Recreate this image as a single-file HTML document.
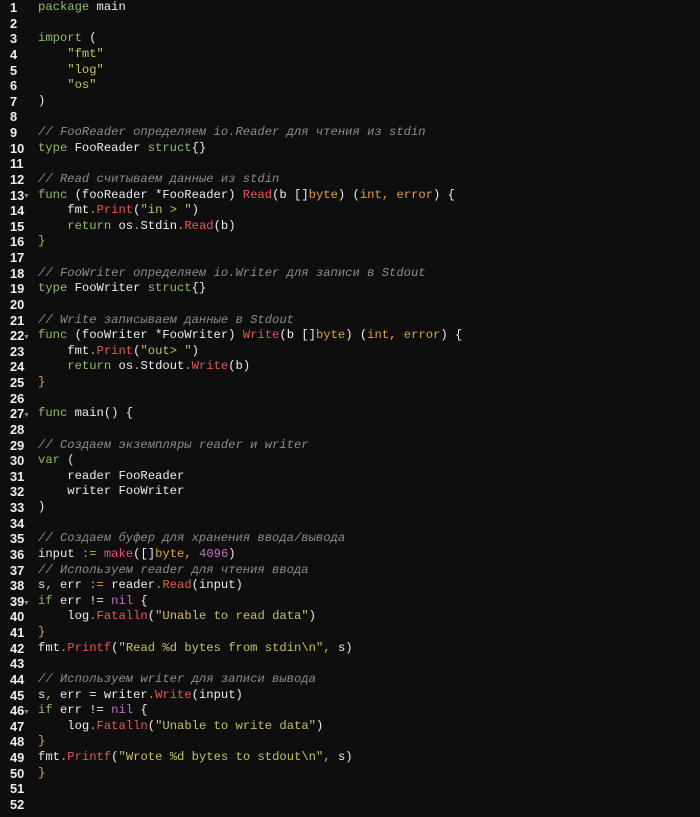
<!DOCTYPE html>
<html><head><meta charset="utf-8"><style>
body{margin:0;background:#0f0e0f;width:700px;height:817px;overflow:hidden}
pre{margin:0;position:absolute;top:0;left:0;font-family:"Liberation Mono","DejaVu Sans Mono",monospace;font-size:12.2px;line-height:15.63px;color:#ececec}
pre.ln{left:10px;width:22px;color:#f0f0f0;font-family:"Liberation Sans","DejaVu Sans",sans-serif;font-size:12.8px;font-weight:bold}
.code{position:absolute;left:38px}
.ar{position:absolute;left:23px;color:#888;font-size:7px;line-height:8px}
.k{color:#8fbd6a}.s{color:#c5c062}.f{color:#e5584a}.t{color:#dca23e}.c{color:#8c8c8c;font-style:italic}.o{color:#e8a040}.p{color:#c26cc8}.m{color:#e0508a}
</style></head><body>
<pre class="ln">1
2
3
4
5
6
7
8
9
10
11
12
13
14
15
16
17
18
19
20
21
22
23
24
25
26
27
28
29
30
31
32
33
34
35
36
37
38
39
40
41
42
43
44
45
46
47
48
49
50
51
52</pre>
<div class="ar" style="top:192px">▼</div>
<div class="ar" style="top:333px">▼</div>
<div class="ar" style="top:411px">▼</div>
<div class="ar" style="top:599px">▼</div>
<div class="ar" style="top:708px">▼</div>
<pre class="code"><span class="k">package</span> main

<span class="k">import</span> (
    <span class="s">"fmt"</span>
    <span class="s">"log"</span>
    <span class="s">"os"</span>
)

<span class="c">// FooReader определяем io.Reader для чтения из stdin</span>
<span class="k">type</span> FooReader <span class="k">struct</span>{}

<span class="c">// Read считываем данные из stdin</span>
<span class="k">func</span> (fooReader *FooReader) <span class="f">Read</span>(b []<span class="t">byte</span>) (<span class="t">int</span><span class="o">,</span> <span class="t">error</span>) {
    fmt<span class="o">.</span><span class="f">Print</span>(<span class="s">"in &gt; "</span>)
    <span class="k">return</span> os<span class="o">.</span>Stdin<span class="o">.</span><span class="f">Read</span>(b)
<span class="o">}</span>

<span class="c">// FooWriter определяем io.Writer для записи в Stdout</span>
<span class="k">type</span> FooWriter <span class="k">struct</span>{}

<span class="c">// Write записываем данные в Stdout</span>
<span class="k">func</span> (fooWriter *FooWriter) <span class="f">Write</span>(b []<span class="t">byte</span>) (<span class="t">int</span><span class="o">,</span> <span class="t">error</span>) {
    fmt<span class="o">.</span><span class="f">Print</span>(<span class="s">"out&gt; "</span>)
    <span class="k">return</span> os<span class="o">.</span>Stdout<span class="o">.</span><span class="f">Write</span>(b)
<span class="o">}</span>

<span class="k">func</span> main() {

<span class="c">// Создаем экземпляры reader и writer</span>
<span class="k">var</span> (
    reader FooReader
    writer FooWriter
)

<span class="c">// Создаем буфер для хранения ввода/вывода</span>
input <span class="o">:=</span> <span class="m">make</span>([]<span class="t">byte</span><span class="o">,</span> <span class="p">4096</span>)
<span class="c">// Используем reader для чтения ввода</span>
s<span class="o">,</span> err <span class="o">:=</span> reader<span class="o">.</span><span class="f">Read</span>(input)
<span class="k">if</span> err != <span class="p">nil</span> {
    log<span class="o">.</span><span class="f">Fatalln</span>(<span class="s">"Unable to read data"</span>)
<span class="o">}</span>
fmt<span class="o">.</span><span class="f">Printf</span>(<span class="s">"Read %d bytes from stdin\n"</span><span class="o">,</span> s)

<span class="c">// Используем writer для записи вывода</span>
s<span class="o">,</span> err = writer<span class="o">.</span><span class="f">Write</span>(input)
<span class="k">if</span> err != <span class="p">nil</span> {
    log<span class="o">.</span><span class="f">Fatalln</span>(<span class="s">"Unable to write data"</span>)
<span class="o">}</span>
fmt<span class="o">.</span><span class="f">Printf</span>(<span class="s">"Wrote %d bytes to stdout\n"</span><span class="o">,</span> s)
<span class="o">}</span>
</pre>
</body></html>
